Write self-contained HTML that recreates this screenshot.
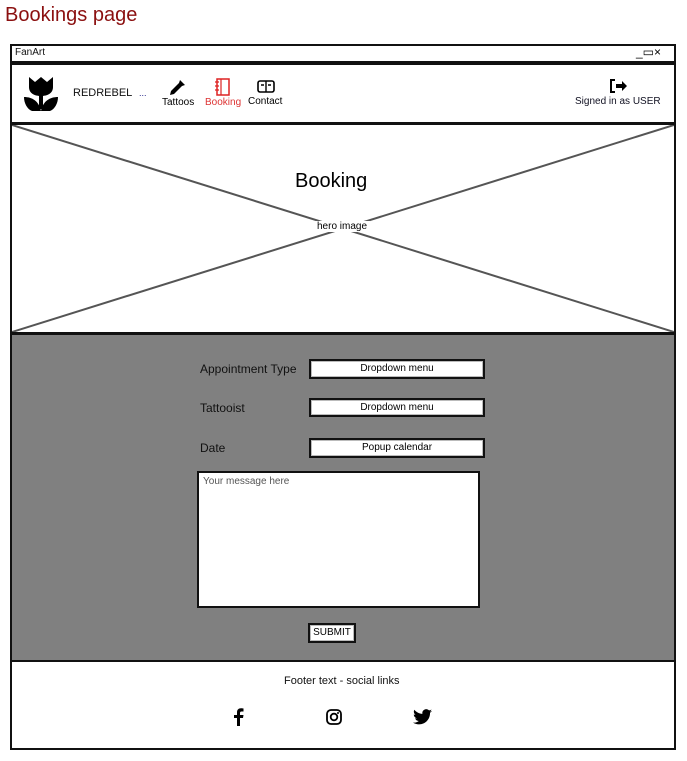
<!DOCTYPE html>
<html><head><style>
*{margin:0;padding:0;box-sizing:border-box}
body{width:687px;height:761px;background:#fff;position:relative;font-family:"Liberation Sans",sans-serif;overflow:hidden}
.a{position:absolute}
.t{font-size:12px;color:#111}
.inp{position:absolute;background:#fff;border:2px solid #111;font-size:10px;text-align:center;line-height:15px;box-shadow:inset 0 0 0 1px #bbb}
</style></head><body>
<div class="a" style="left:5px;top:4px;font-size:20px;color:#8b1010">Bookings page</div>
<div class="a" style="left:10px;top:44px;width:666px;height:706px;border:2px solid #111"></div>
<div class="a" style="left:10px;top:61px;width:666px;height:2px;background:#111"></div>
<div class="a t" style="left:15px;top:47px;font-size:10px">FanArt</div>
<div class="a" style="left:636px;top:45px;font-size:12px">_▭×</div>
<div class="a" style="left:10px;top:63px;width:666px;height:61px;border:2px solid #111"></div>
<svg class="a" style="left:22px;top:75px" width="38" height="38" viewBox="0 0 38 38"><path d="M7 2l6 5 6-5 6 5 6-5v10c0 6-5 9-12 9S7 18 7 12z" fill="#000"/><rect x="17" y="18" width="4" height="16" fill="#000"/><path d="M2 22c8 0 15 4 17 14H10C5 34 2 28 2 22zM36 22c-8 0-15 4-17 14h9c5-2 8-8 8-14z" fill="#000"/></svg>
<div class="a t" style="left:73px;top:87px;font-size:11px">REDREBEL</div>
<div class="a" style="left:139px;top:88px;font-size:9px;color:#228">...</div>
<svg class="a" style="left:166px;top:78px" width="22" height="18" viewBox="0 0 22 18"><path d="M14 2l5 5-3 1-8 8-4 1 1-4 8-8z" fill="#000"/></svg>
<div class="a" style="left:162px;top:97px;font-size:10px">Tattoos</div>
<svg class="a" style="left:214px;top:78px" width="18" height="18" viewBox="0 0 18 18"><rect x="3" y="1" width="12" height="16" fill="none" stroke="#d22" stroke-width="1.5"/><path d="M7 1v16M1 4h4M1 8h4M1 12h4" stroke="#d22" stroke-width="1.2"/></svg>
<div class="a" style="left:205px;top:97px;font-size:10px;color:#d33">Booking</div>
<svg class="a" style="left:257px;top:80px" width="18" height="13" viewBox="0 0 18 13"><rect x="1" y="1" width="16" height="11" rx="2" fill="none" stroke="#000" stroke-width="1.6"/><path d="M9 1v11M4 5h3M11 5h3" stroke="#000" stroke-width="1.4"/></svg>
<div class="a" style="left:248px;top:96px;font-size:10px">Contact</div>
<svg class="a" style="left:608px;top:78px" width="20" height="16" viewBox="0 0 20 16"><path d="M7 2H3v12h4" fill="none" stroke="#000" stroke-width="2"/><path d="M8 6h6V3l5 5-5 5v-3H8z" fill="#000"/></svg>
<div class="a" style="left:575px;top:96px;font-size:10px;color:#112">Signed in as USER</div>
<div class="a" style="left:10px;top:123px;width:666px;height:211px;border:2px solid #111"></div>
<svg class="a" style="left:12px;top:125px" width="662" height="207"><line x1="0" y1="0" x2="662" y2="207" stroke="#555" stroke-width="2"/><line x1="662" y1="0" x2="0" y2="207" stroke="#555" stroke-width="2"/></svg>
<div class="a" style="left:295px;top:170px;font-size:20px">Booking</div>
<div class="a" style="left:314px;top:221px;font-size:10px;background:#fff;padding:0 3px">hero image</div>
<div class="a" style="left:10px;top:333px;width:666px;height:329px;background:#808080;border:2px solid #111"></div>
<div class="a t" style="left:200px;top:362px">Appointment Type</div>
<div class="a t" style="left:200px;top:401px">Tattooist</div>
<div class="a t" style="left:200px;top:441px">Date</div>
<div class="inp" style="left:309px;top:359px;width:176px;height:20px;line-height:16px">Dropdown menu</div>
<div class="inp" style="left:309px;top:398px;width:176px;height:19px">Dropdown menu</div>
<div class="inp" style="left:309px;top:438px;width:176px;height:20px;line-height:15px">Popup calendar</div>
<div class="a" style="left:197px;top:471px;width:283px;height:137px;background:#fff;border:2px solid #111;font-size:10px;color:#555;padding:3px 4px">Your message here</div>
<div class="inp" style="left:308px;top:623px;width:48px;height:20px;font-size:10px;line-height:16px">SUBMIT</div>
<div class="a t" style="left:284px;top:675px;font-size:11px">Footer text - social links</div>
<svg class="a" style="left:232px;top:708px" width="12" height="18" viewBox="0 0 12 18"><path d="M8 18V10h3l.5-3H8V5c0-1 .5-1.5 1.5-1.5H11.5V.5C11 .4 10 .3 9 .3 6.5.3 5 1.8 5 4.5V7H2v3h3v8z" fill="#000"/></svg>
<svg class="a" style="left:326px;top:709px" width="16" height="16" viewBox="0 0 16 16"><rect x="1" y="1" width="14" height="14" rx="4" fill="none" stroke="#000" stroke-width="1.8"/><circle cx="8" cy="8" r="3.3" fill="none" stroke="#000" stroke-width="1.8"/><circle cx="12" cy="4" r="1" fill="#000"/></svg>
<svg class="a" style="left:413px;top:709px" width="19" height="16" viewBox="0 0 24 20"><path d="M24 2.4c-.9.4-1.800.7-2.8.8 1-.6 1.8-1.6 2.2-2.7-1 .6-2 1-3.1 1.2A4.9 4.9 0 0 0 11.9 6C7.7 5.8 4.1 3.8 1.7.8c-1.3 2.3-.6 5.1 1.5 6.5-.8 0-1.6-.2-2.200-.6 0 2.4 1.7 4.4 3.9 4.8-.7.2-1.5.2-2.2.1.6 2 2.4 3.4 4.6 3.4A9.9 9.9 0 0 1 0 17.1 14 14 0 0 0 7.5 19.3c9.1 0 14.3-7.7 14-14.6 1-.7 1.8-1.5 2.5-2.3z" fill="#000"/></svg>
</body></html>
